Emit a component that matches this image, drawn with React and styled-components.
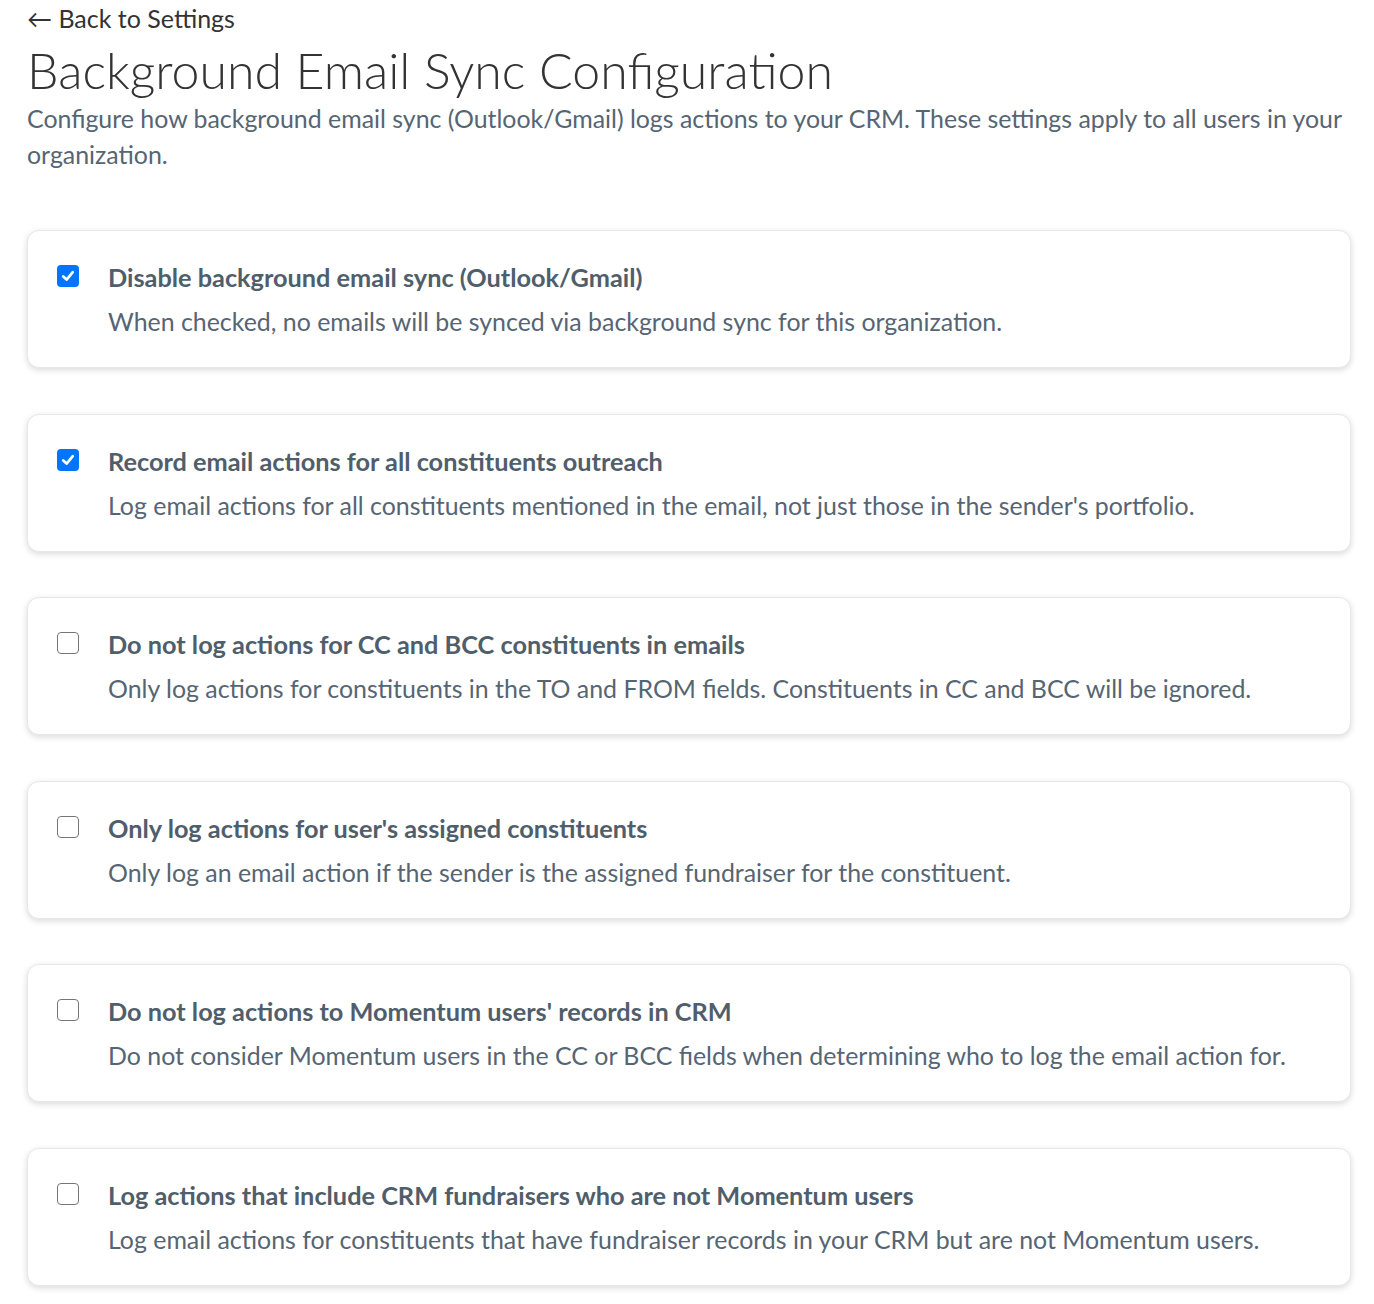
import styled, { createGlobalStyle } from "styled-components";

const settings = [
    {
        title: "Disable background email sync (Outlook/Gmail)",
        text: "When checked, no emails will be synced via background sync for this organization.",
        checked: true,
    },
    {
        title: "Record email actions for all constituents outreach",
        text: "Log email actions for all constituents mentioned in the email, not just those in the sender's portfolio.",
        checked: true,
    },
    {
        title: "Do not log actions for CC and BCC constituents in emails",
        text: "Only log actions for constituents in the TO and FROM fields. Constituents in CC and BCC will be ignored.",
        checked: false,
    },
    {
        title: "Only log actions for user's assigned constituents",
        text: "Only log an email action if the sender is the assigned fundraiser for the constituent.",
        checked: false,
    },
    {
        title: "Do not log actions to Momentum users' records in CRM",
        text: "Do not consider Momentum users in the CC or BCC fields when determining who to log the email action for.",
        checked: false,
    },
    {
        title: "Log actions that include CRM fundraisers who are not Momentum users",
        text: "Log email actions for constituents that have fundraiser records in your CRM but are not Momentum users.",
        checked: false,
    },
];

const Check = ({ checked }) => (
    <StCheck checked={checked}>
        {checked && (
            <svg width="16" height="16" viewBox="0 0 16 16">
                <path
                    d="M3.2 8.4 L6.6 11.6 L12.8 4.2"
                    fill="none"
                    stroke="#fff"
                    strokeWidth="2.7"
                    strokeLinecap="round"
                    strokeLinejoin="round"
                />
            </svg>
        )}
    </StCheck>
);

const App = () => {
    return (
        <>
            <GlobalStyle />
            <StPage>
                <StBack>← Back to Settings</StBack>
                <StTitle>Background Email Sync Configuration</StTitle>
                <StIntro>
                    Configure how background email sync (Outlook/Gmail) logs actions to your CRM. These settings
                    apply to all users in your organization.
                </StIntro>
                <StList>
                    {settings.map((item) => (
                        <StCard key={item.title}>
                            <Check checked={item.checked} />
                            <div>
                                <StCardTitle>{item.title}</StCardTitle>
                                <StCardText>{item.text}</StCardText>
                            </div>
                        </StCard>
                    ))}
                </StList>
            </StPage>
        </>
    );
};

export default App;

const GlobalStyle = createGlobalStyle`
    body {
        margin: 0;
        background: #fff;
        font-family: Lato, "Open Sans", "Liberation Sans", sans-serif;
    }
`;

const StPage = styled.div`
    padding: 0 23px 16px 27px;
`;

const StBack = styled.div`
    font-size: 25px;
    line-height: 36px;
    color: #333;
    cursor: pointer;
`;

const StTitle = styled.h1`
    margin: 6px 0 0;
    font-size: 50px;
    font-weight: 300;
    line-height: 57px;
    color: #333;
`;

const StIntro = styled.p`
    margin: 1px 0 0;
    font-size: 24.9px;
    line-height: 36px;
    color: #566573;
`;

const StList = styled.div`
    display: flex;
    flex-direction: column;
    gap: 45.6px;
    margin-top: 58px;
`;

const StCard = styled.div`
    display: flex;
    align-items: flex-start;
    gap: 29px;
    padding: 30px 29px;
    border: 1px solid #e8e8e8;
    border-radius: 12px;
    background: #fff;
    box-shadow: 0 2px 6px rgba(0, 0, 0, 0.15);
`;

const StCheck = styled.span`
    flex: none;
    display: flex;
    align-items: center;
    justify-content: center;
    box-sizing: border-box;
    width: 22px;
    height: 22px;
    margin-top: 4px;
    border-radius: 4px;
    border: ${({ checked }) => (checked ? "none" : "1.5px solid #767676")};
    background: ${({ checked }) => (checked ? "#0075ff" : "#fff")};
`;

const StCardTitle = styled.div`
    font-size: 25.3px;
    font-weight: 700;
    line-height: 32px;
    color: #505e6b;
`;

const StCardText = styled.div`
    margin-top: 12px;
    font-size: 24.9px;
    line-height: 32px;
    color: #566573;
`;
